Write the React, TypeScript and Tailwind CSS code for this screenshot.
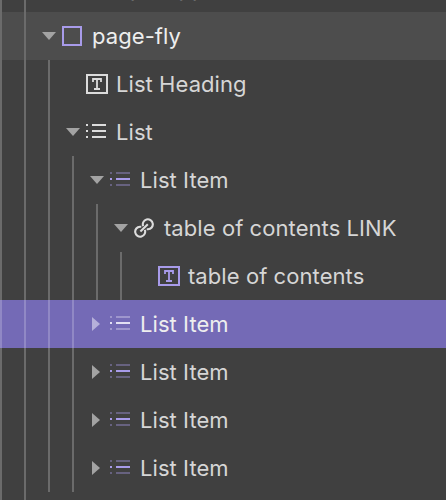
type IconKind = "box" | "text" | "list" | "link";

interface Node {
  label: string;
  depth: number;
  icon: IconKind;
  arrow?: "open" | "closed";
  accent?: boolean;
  state?: "hover" | "selected";
}

const nodes: Node[] = [
  { label: "page-fly", depth: 2, icon: "box", arrow: "open", accent: true, state: "hover" },
  { label: "List Heading", depth: 3, icon: "text" },
  { label: "List", depth: 3, icon: "list", arrow: "open" },
  { label: "List Item", depth: 4, icon: "list", arrow: "open", accent: true },
  { label: "table of contents LINK", depth: 5, icon: "link", arrow: "open" },
  { label: "table of contents", depth: 6, icon: "text", accent: true },
  { label: "List Item", depth: 4, icon: "list", arrow: "closed", accent: true, state: "selected" },
  { label: "List Item", depth: 4, icon: "list", arrow: "closed", accent: true },
  { label: "List Item", depth: 4, icon: "list", arrow: "closed", accent: true },
  { label: "List Item", depth: 4, icon: "list", arrow: "closed", accent: true },
];

function Guides({ count, selected }: { count: number; selected?: boolean }) {
  return (
    <div className="flex shrink-0 self-stretch">
      {Array.from({ length: count }, (_, i) => (
        <div key={i} className={`w-6 border-l-2 ${selected ? "border-[#9088c5]" : "border-[#6b6b6b]"}`} />
      ))}
    </div>
  );
}

function Arrow({ kind, selected }: { kind?: "open" | "closed"; selected?: boolean }) {
  return (
    <svg className={`-ml-1.5 h-5 w-[14px] shrink-0 ${selected ? "text-[#b6b0da]" : "text-[#a3a3a3]"}`} viewBox="0 0 14 20" fill="currentColor">
      {kind === "open" && <path d="M0 6h14L7 14z" />}
      {kind === "closed" && <path d="M2 3v14l8-7z" />}
    </svg>
  );
}

function Icon({ kind, accent, selected }: { kind: IconKind; accent?: boolean; selected?: boolean }) {
  const color = selected ? "text-[#e3e0f3]" : accent ? "text-[#a89bea]" : "text-[#dcdcdc]";
  return (
    <svg className={`ml-1.5 h-5 w-[22px] shrink-0 ${color}`} viewBox="0 0 22 20" fill="none" stroke="currentColor" strokeWidth="2">
      {kind === "box" && <path d="M1 1h18v18H1z" />}
      {kind === "text" && (
        <>
          <path d="M1 1h20v18H1z" />
          <path d="M7 8V5h8v3M11 5v10M8 15h6" strokeWidth="1.8" />
        </>
      )}
      {kind === "list" && (
        <>
          <path d="M0 3h2M6 3h14M0 15h2M6 15h14" opacity={accent ? 0.38 : 1} />
          <path d="M0 9h2M6 9h14" />
        </>
      )}
      {kind === "link" && (
        <path d="M6.4 13.6l7.4-7.4M9.2 8.2a5 5 0 1 1 4.8 3.1l-1.3-.1M10.8 11.8a5 5 0 1 1-4.8-3.1l1.3.1" strokeWidth="2.1" />
      )}
    </svg>
  );
}

function Row({ node }: { node: Node }) {
  const selected = node.state === "selected";
  const bg = selected ? "bg-[#746ab6]" : node.state === "hover" ? "bg-[#4d4d4d]" : "";
  return (
    <div className={`flex h-12 shrink-0 items-center ${bg}`}>
      <Guides count={node.depth} selected={selected} />
      <Arrow kind={node.arrow} selected={selected} />
      <Icon kind={node.icon} accent={node.accent} selected={selected} />
      <span className={`ml-2 whitespace-nowrap text-[22px] font-normal leading-[30px] tracking-[0.07px] ${node.state ? "text-[#eeeeee]" : "text-[#d6d6d6]"}`}>
        {node.label}
      </span>
    </div>
  );
}

export default function App() {
  return (
    <div className="flex h-[500px] w-[446px] flex-col overflow-hidden bg-[#404040] font-['Inter',sans-serif]">
      <div className="flex h-3 shrink-0 items-end overflow-hidden">
        <Row node={{ label: "shop-support", depth: 2, icon: "box", arrow: "open", accent: true }} />
      </div>
      {nodes.map((node, i) => (
        <Row key={i} node={node} />
      ))}
      <div className="flex h-2 shrink-0">
        <Guides count={2} />
      </div>
    </div>
  );
}
